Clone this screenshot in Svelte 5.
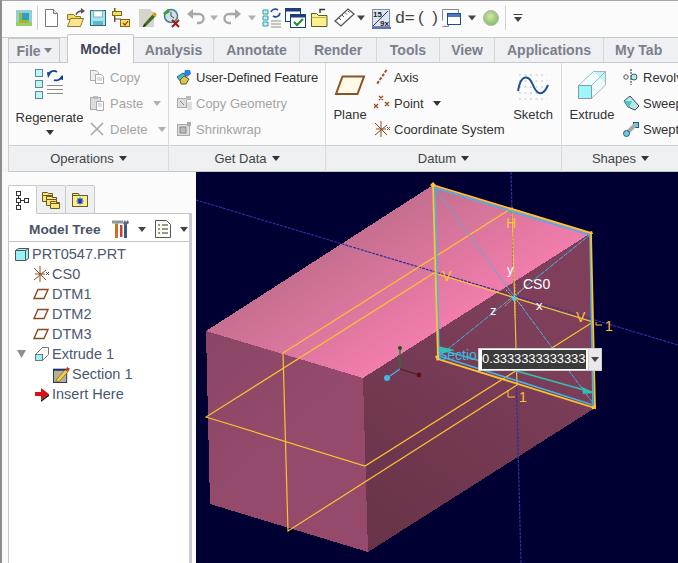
<script>
  const tabs = ['Analysis', 'Annotate', 'Render', 'Tools', 'View', 'Applications', 'My Tab'];
</script>

<div class="app">
  <div class="toolbar">
    <svg class="ti first" viewBox="0 0 24 24"><rect x="4" y="4" width="16" height="16" fill="#8fd0d8"/><rect x="4" y="16" width="16" height="4" fill="#9ccb6a"/><rect x="7" y="7" width="10" height="10" fill="#a3b62e"/><rect x="10" y="7" width="7" height="7" fill="#2f9fc0"/></svg>
    <span class="sep m1"></span>
    <svg class="ti m1" viewBox="0 0 24 24"><path d="M6.500 3.500h8l4 4v13h-12z" fill="#fff" stroke="#777"/><path d="M14.500 3.500v4h4" fill="#eee" stroke="#777"/></svg>
    <svg class="ti" viewBox="0 0 24 24"><path d="M4.500 8.500h6l2 2h5v3h-13z" fill="#f4d860" stroke="#8a7a30"/><path d="M4.500 20.500l3-8h13l-3 8z" fill="#fae78a" stroke="#8a7a30"/><path d="M13 9c1-3 3-4 6-4" fill="none" stroke="#555" stroke-width="1.400"/><path d="M18 2l4 3-4 3z" fill="#555"/></svg>
    <svg class="ti mn1" viewBox="0 0 24 24"><rect x="4.500" y="4.500" width="15" height="15" fill="#a5e4ea" stroke="#2a6d86"/><rect x="7.500" y="5" width="9" height="6" fill="#fff" stroke="#7fb6c2"/><rect x="7" y="15" width="10" height="4" fill="#5fb8cc"/></svg>
    <svg class="ti mn1" viewBox="0 0 24 24"><rect x="5" y="2" width="1.500" height="14" fill="#6c5a1c"/><rect x="3.500" y="5.500" width="9" height="4" fill="#f6e05a" stroke="#7a6a20"/><path d="M6 13h6" stroke="#555"/><rect x="11.500" y="13.500" width="9" height="7" fill="#f6e05a" stroke="#7a6a20"/><path d="M14 17l2 2 3-4" fill="none" stroke="#b52020" stroke-width="1.200"/></svg>
    <svg class="ti m2" viewBox="0 0 24 24"><path d="M4 3h11l4 4v14H4z" fill="#d5d5cc"/><path d="M9 18l9-10 3 2-10 10-3 1z" fill="#3f6a22"/><path d="M17 9l2-3 3 2-2 3z" fill="#d2a020"/><path d="M9 18l2 2-3 1z" fill="#222"/></svg>
    <svg class="ti" viewBox="0 0 24 24"><circle cx="12" cy="10" r="6.500" fill="#cfe0e8" stroke="#4a7a90" stroke-width="1.500"/><path d="M4 7l5-4 2 3-5 3z" fill="#3aa040"/><path d="M12 6v4l3 2" fill="none" stroke="#444"/><path d="M13 14l7 7M20 14l-7 7" stroke="#a01818" stroke-width="2"/></svg>
    <svg class="ti m1" viewBox="0 0 24 24"><path d="M8 8h7a4.500 4.500 0 0 1 0 9h-2" fill="none" stroke="#a8a8a8" stroke-width="2.400"/><path d="M9 3v10l-6-5z" fill="#a8a8a8"/></svg>
    <svg class="ta" viewBox="0 0 12 24"><path d="M2 9.500h8l-4 5z" fill="#b0b0b0"/></svg>
    <svg class="ti" viewBox="0 0 24 24"><path d="M16 8H9a4.500 4.500 0 0 0 0 9h2" fill="none" stroke="#a8a8a8" stroke-width="2.400"/><path d="M15 3v10l6-5z" fill="#a8a8a8"/></svg>
    <svg class="ta m2" viewBox="0 0 12 24"><path d="M2 9.500h8l-4 5z" fill="#b0b0b0"/></svg>
    <svg class="ti m2" viewBox="0 0 24 24"><path d="M3 4h5v4H3zM3 10h5v4H3zM3 16h5v4H3z" fill="#bff0f4" stroke="#3a9aa8"/><path d="M11 15h10M11 18h10M11 21h10" stroke="#8d8d8d"/><path d="M11 6a4.500 4.500 0 0 1 7-2" fill="none" stroke="#1a4a9a" stroke-width="1.600"/><path d="M20 7a4.500 4.500 0 0 1-7 3" fill="none" stroke="#1a4a9a" stroke-width="1.600"/></svg>
    <svg class="ti mn1" viewBox="0 0 24 24"><rect x="2.500" y="2.500" width="15" height="13" fill="#fff" stroke="#1c3f7a"/><rect x="3" y="3" width="14" height="2.500" fill="#1c3f7a"/><rect x="7.500" y="8.500" width="15" height="13" fill="#fff" stroke="#1c3f7a"/><rect x="8" y="9" width="14" height="2.500" fill="#1c3f7a"/><path d="M11 16l3 3 6-6" fill="none" stroke="#1f8a2f" stroke-width="2"/></svg>
    <svg class="ti" viewBox="0 0 24 24"><path d="M4.500 7.500h5l2 2h8.500v11h-15.500z" fill="#faf08c" stroke="#5a5a2a"/><path d="M4.500 11.500h15.500" stroke="#c4b440"/><path d="M13 7V3.500h5" fill="none" stroke="#333" stroke-width="1.400"/></svg>
    <svg class="ti m1" viewBox="0 0 24 24"><path d="M3 15L16 3l6 5L9 20z" fill="#fff" stroke="#555" stroke-width="1.300"/><path d="M7 12l2 2M10 9l2 2M13 6.500l2 2M16 5l1.500 1.500" stroke="#555"/></svg>
    <svg class="ta mn1" viewBox="0 0 12 24"><path d="M2 9.500h8l-4 5z" fill="#444"/></svg>
    <svg class="ti m2" viewBox="0 0 24 24"><rect x="3.500" y="3.500" width="17" height="17" fill="#dde6ef" stroke="#88a"/><text class="mini" x="4" y="11">15</text><path d="M4 20L19 5" stroke="#1c3f7a"/><text class="mini" x="11" y="20">9x</text><path d="M3 22h19" stroke="#1c4a9a" stroke-width="1.500"/></svg>
    <span class="dtxt">d=</span>
    <span class="dtxt paren">( )</span>
    <svg class="ti mn1" viewBox="0 0 24 24"><path d="M2.500 14.500v-11h16M2.500 20.500h6v-3" fill="none" stroke="#888"/><path d="M18.500 3.500v5" stroke="#888"/><rect x="7.500" y="7.500" width="13" height="11" fill="#fff" stroke="#1c4a9a"/><rect x="8" y="8" width="12" height="3" fill="#4a78c0"/></svg>
    <svg class="ta m2" viewBox="0 0 12 24"><path d="M2 9.500h8l-4 5z" fill="#444"/></svg>
    <svg class="ti m1" viewBox="0 0 24 24"><defs><radialGradient id="gb" cx=".45" cy=".4" r=".6"><stop offset="0" stop-color="#cfe9a8"/><stop offset="1" stop-color="#86bd62"/></radialGradient></defs><circle cx="12" cy="12" r="7.500" fill="url(#gb)" stroke="#b5b5b5"/></svg>
    <span class="sep m2"></span>
    <svg class="ta ml8" viewBox="0 0 12 24"><path d="M1.500 8.500h9" stroke="#444"/><path d="M2 11h8l-4 5z" fill="#444"/></svg>
  </div>

  <div class="tabbar">
    <div class="tab file">File <svg class="tri" viewBox="0 0 8 5"><path d="M0 0h8L4 5z" fill="#7a7f8a"/></svg></div>
    <div class="tab active">Model</div>
    {#each tabs as t}
      <div class="tab t-{t.replace(' ', '').toLowerCase()}">{t}</div>
    {/each}
  </div>

  <div class="ribbon">
    <section class="group g1">
      <div class="body">
        <div class="big regen">
          <svg class="bi" width="32" height="32" viewBox="0 0 32 32"><g fill="#bff3f5" stroke="#5a8a92"><rect x="1.500" y="1.500" width="7" height="7"/><rect x="1.500" y="12.500" width="7" height="7"/><rect x="1.500" y="23.500" width="7" height="7"/></g><path d="M14 7a6 6 0 0 1 9-3" fill="none" stroke="#123f9a" stroke-width="1.800"/><path d="M13 4l4 1-3 5z" fill="#123f9a"/><path d="M28 8a6 6 0 0 1-8 4" fill="none" stroke="#123f9a" stroke-width="1.800"/><path d="M29 12l-4-1 4-4z" fill="#123f9a"/><path d="M13 17.500h16M13 21.500h16M13 25.500h16" stroke="#8a8a8a"/></svg>
          <span>Regenerate</span>
          <svg class="tri dark" viewBox="0 0 8 5"><path d="M0 0h8L4 5z" fill="#333"/></svg>
        </div>
        <div class="col c-ops">
          <div class="row off"><svg class="si" viewBox="0 0 16 16"><path d="M1.500 1.500h6l2 2v8h-8z" fill="#eee" stroke="#aaa"/><path d="M6.500 5.500h6l2 2v7h-8z" fill="#fff" stroke="#aaa"/><path d="M8 9h5M8 11h5" stroke="#bbb"/></svg>Copy</div>
          <div class="row off"><svg class="si" viewBox="0 0 16 16"><rect x="1.500" y="2.500" width="10" height="12" fill="#ddd" stroke="#aaa"/><rect x="4" y="1" width="5" height="3" fill="#bbb"/><path d="M7.500 6.500h7v9h-7z" fill="#fff" stroke="#aaa"/><path d="M9 9h4M9 11h4" stroke="#bbb"/></svg>Paste <svg class="tri gap" viewBox="0 0 8 5"><path d="M0 0h8L4 5z" fill="#b0b0b0"/></svg></div>
          <div class="row off"><svg class="si" viewBox="0 0 16 16"><path d="M2 2l12 12M14 2L2 14" stroke="#aaa" stroke-width="1.600"/></svg>Delete <svg class="tri gap" viewBox="0 0 8 5"><path d="M0 0h8L4 5z" fill="#b0b0b0"/></svg></div>
        </div>
      </div>
      <div class="bar">Operations <svg class="tri dark" viewBox="0 0 8 5"><path d="M0 0h8L4 5z" fill="#333"/></svg></div>
    </section>

    <section class="group g2">
      <div class="body">
        <div class="col c-data">
          <div class="row tight"><svg class="si" viewBox="0 0 16 16"><path d="M1 8l6-4 3 3-5 6z" fill="#3fc4d4" stroke="#357"/><path d="M9 1h5l1 4-4 3-3-3z" fill="#2f7ee0"/><path d="M4 11l4-4 5 3-3 5H5z" fill="#d9c84a" stroke="#665a20"/></svg>User-Defined Feature</div>
          <div class="row off"><svg class="si" viewBox="0 0 16 16"><rect x="1.500" y="3.500" width="9" height="9" fill="#ddd" stroke="#aaa"/><rect x="10" y="1" width="5" height="4" fill="#bbb"/><rect x="11" y="7" width="5" height="8" fill="#ddd"/><path d="M4 6l4 4" stroke="#888"/></svg>Copy Geometry</div>
          <div class="row off"><svg class="si" viewBox="0 0 16 16"><rect x="1.500" y="3.500" width="12" height="11" fill="#ddd" stroke="#aaa"/><rect x="4" y="6" width="6" height="6" fill="#bbb" stroke="#888"/><rect x="11" y="1" width="4" height="4" fill="#aaa"/></svg>Shrinkwrap</div>
        </div>
      </div>
      <div class="bar">Get Data <svg class="tri dark" viewBox="0 0 8 5"><path d="M0 0h8L4 5z" fill="#333"/></svg></div>
    </section>

    <section class="group g3">
      <div class="body">
        <div class="big plane">
          <svg class="bi" width="32" height="32" viewBox="0 0 32 32"><path d="M8.500 7.500H30L23.500 25H2z" fill="#fffbe8" stroke="#8a5228" stroke-width="2"/></svg>
          <span>Plane</span>
        </div>
        <div class="col c-datum">
          <div class="row"><svg class="si" viewBox="0 0 16 16"><path d="M12.500 1L3 15" stroke="#9a5226" stroke-width="2" stroke-dasharray="3 1.500"/></svg>Axis</div>
          <div class="row"><svg class="si" viewBox="0 0 16 16"><path d="M5 1l4 4M9 1L5 5M0 9l4 4M4 9l-4 4M11 7l4 4M15 7l-4 4" stroke="#9a4a20" stroke-width="1.300"/></svg>Point <svg class="tri dark gap" viewBox="0 0 8 5"><path d="M0 0h8L4 5z" fill="#333"/></svg></div>
          <div class="row"><svg class="si" viewBox="0 0 16 16"><path d="M7 0v16M1 2l12 12M1 14L13 4M2 8h10" stroke="#8a4a20"/><path d="M13 6l3 3M16 6l-3 3" stroke="#555"/></svg>Coordinate System</div>
        </div>
        <div class="big sketch">
          <svg class="bi" width="32" height="32" viewBox="0 0 32 32"><path d="M2 6h28M2 12h28M2 18h28M2 24h28M2 30h28" stroke="#b8c0c8" stroke-dasharray="2 3.500"/><path d="M1 22C4 4 12 6 16 16S26 28 31 16" fill="none" stroke="#1f4f96" stroke-width="2"/></svg>
          <span>Sketch</span>
        </div>
      </div>
      <div class="bar">Datum <svg class="tri dark" viewBox="0 0 8 5"><path d="M0 0h8L4 5z" fill="#333"/></svg></div>
    </section>

    <section class="group g4">
      <div class="body">
        <div class="big extrude">
          <svg class="bi" width="32" height="32" viewBox="0 0 32 32"><path d="M3 17L18 2h12v15L15 30H3z" fill="#eefcfd"/><path d="M18 2.500H29.500V14L24 9z" fill="#bdf6fa"/><rect x="2.500" y="16.500" width="13" height="13" fill="#9ef5fb" stroke="#8a9aa0"/><path d="M2.500 16.500L17.500 2.500H29.500V16L15.500 29.500M15.500 16.500L29.500 2.500" fill="none" stroke="#a8b4ba"/></svg>
          <span>Extrude</span>
        </div>
        <div class="col c-shapes">
          <div class="row"><svg class="si" viewBox="0 0 16 16"><path d="M8 0v16" stroke="#222" stroke-dasharray="2 1"/><circle cx="3" cy="8" r="2.200" fill="#fff" stroke="#555"/><circle cx="11" cy="8" r="3" fill="#9ceef2" stroke="#555"/></svg>Revolve</div>
          <div class="row"><svg class="si" viewBox="0 0 16 16"><path d="M1 6l6-5 9 10-4 4-7-3z" fill="#b8e8ea" stroke="#445"/><path d="M1 6l5 7 3-7z" fill="#4fc8cc"/></svg>Sweep</div>
          <div class="row"><svg class="si" viewBox="0 0 16 16"><rect x="10.500" y="1.500" width="5" height="5" fill="#5fd4dc" stroke="#357"/><path d="M4 12l8-8" stroke="#aaa" stroke-width="4"/><circle cx="3.500" cy="12.500" r="3" fill="#5fd4dc" stroke="#357"/></svg>Swept</div>
        </div>
      </div>
      <div class="bar">Shapes <svg class="tri dark" viewBox="0 0 8 5"><path d="M0 0h8L4 5z" fill="#333"/></svg></div>
    </section>
  </div>

  <div class="main">
    <aside class="side">
      <div class="ptabs">
        <div class="ptab on"><svg width="16" height="20" viewBox="0 0 16 20"><g fill="#fff" stroke="#333"><rect x="1.500" y="1.500" width="4" height="4"/><rect x="1.500" y="8.500" width="4" height="4"/><rect x="9.500" y="8.500" width="4" height="4"/><rect x="1.500" y="15.500" width="4" height="4"/></g><path d="M3.500 5.500v3M3.500 12.500v3M5.500 10.500h4" stroke="#333"/></svg></div>
        <div class="ptab"><svg width="20" height="20" viewBox="0 0 20 20"><g fill="#f8e878" stroke="#6a5a20"><path d="M1.500 5.500v-3h5l1 1h4v2z"/><path d="M1.500 5.500h10v6h-10z"/><path d="M5.500 9.500v-3h5l1 1h4v2z"/><path d="M5.500 9.500h10v6h-10z"/><path d="M9.500 13.500v-2h5l1 1h3v1z"/><path d="M9.500 13.500h9v5h-9z"/></g></svg></div>
        <div class="ptab"><svg width="18" height="16" viewBox="0 0 18 16"><path d="M1.500 3.500v-2h6l1 2z" fill="#f8e878" stroke="#6a5a20"/><rect x="1.500" y="3.500" width="15" height="11" fill="#fbf08a" stroke="#6a5a20"/><path d="M9 5.500v7M5.500 9h7M6.500 6.500l5 5M11.500 6.500l-5 5" stroke="#1030d0" stroke-width="1.200"/></svg></div>
      </div>
      <div class="panel">
        <div class="phead">
          <span class="ptitle">Model Tree</span>
          <svg class="htool" width="20" height="20" viewBox="0 0 20 20"><path d="M1 1.500h11v3H1z" fill="#8a979e"/><path d="M4 4.500h3V19H4z" fill="#c8702a"/><path d="M7 5h1v14H7z" fill="#fff"/><path d="M9 6h2.500v12H9z" fill="#d04030"/><path d="M13 5l3-1v15h-3z" fill="#3a5a8a"/><path d="M12 4l2-3 1 2 2-2 1 3-3 2h-2z" fill="#5a6a7a"/></svg>
          <svg class="tri dark h1" viewBox="0 0 8 5"><path d="M0 0h8L4 5z" fill="#444"/></svg>
          <svg class="hlist" width="16" height="18" viewBox="0 0 16 18"><path d="M.5.500h11l4 4v13H.500z" fill="#fdfdf2" stroke="#555"/><path d="M3 5h2M3 9h2M3 13h2M7 5h6M7 9h6M7 13h6" stroke="#333"/></svg>
          <svg class="tri dark h2" viewBox="0 0 8 5"><path d="M0 0h8L4 5z" fill="#444"/></svg>
        </div>
        <ul class="tree">
          <li class="root"><svg class="si" viewBox="0 0 16 16"><path d="M1.500 4.500l3-2h10v10l-3 2h-10z" fill="#9af2f8" stroke="#555"/><path d="M11.500 14.500v-10h-10M11.500 4.500l3-2" fill="none" stroke="#555"/></svg>PRT0547.PRT</li>
          <li class="l1"><svg class="si" viewBox="0 0 16 16"><path d="M7 0v16M1 2l12 12M1 14L13 4M2 8h10" stroke="#8a4a20"/><path d="M13 6l3 3M16 6l-3 3" stroke="#555"/></svg>CS0</li>
          <li class="l1"><svg class="si" viewBox="0 0 16 16"><path d="M5 3.500h10l-4 9H1z" fill="#fff" stroke="#8a4a20" stroke-width="1.400"/></svg>DTM1</li>
          <li class="l1"><svg class="si" viewBox="0 0 16 16"><path d="M5 3.500h10l-4 9H1z" fill="#fff" stroke="#8a4a20" stroke-width="1.400"/></svg>DTM2</li>
          <li class="l1"><svg class="si" viewBox="0 0 16 16"><path d="M5 3.500h10l-4 9H1z" fill="#fff" stroke="#8a4a20" stroke-width="1.400"/></svg>DTM3</li>
          <li class="ext"><svg class="exp" width="10" height="8" viewBox="0 0 10 8"><path d="M0 0h9L4.500 8z" fill="#8f8f8f"/></svg><svg class="si" viewBox="0 0 16 16"><path d="M1.500 8.500l7-7h6v7l-6 6h-7z" fill="#fff" stroke="#777"/><rect x="1.500" y="8.500" width="7" height="6" fill="#9af2f8" stroke="#777"/></svg>Extrude 1</li>
          <li class="l2"><svg class="si big16" viewBox="0 0 18 18"><rect x=".5" y="3.500" width="14" height="14" fill="#b8b090" stroke="#1c2f6a"/><rect x="0" y="3" width="15" height="2" fill="#1c2f6a"/><path d="M4 14l9-10 3 2-9 10-4 1z" fill="#f4d040" stroke="#333" stroke-width=".5"/><path d="M13 4l2-3 3 2-2 3z" fill="#c04030"/></svg>Section 1</li>
          <li class="ins"><svg class="si" viewBox="0 0 16 16"><path d="M0 6h6V2l8 6-8 6v-4H0z" fill="#d8101c"/><path d="M6 14l8-6v2l-8 6z" fill="#222"/></svg>Insert Here</li>
        </ul>
      </div>
    </aside>

    <div class="view">
      <svg class="scene" viewBox="196 172 482 391" preserveAspectRatio="none">
        <defs>
          <linearGradient id="top" gradientUnits="userSpaceOnUse" x1="320" y1="258" x2="385" y2="362"><stop offset="0" stop-color="#c66f90"/><stop offset="1" stop-color="#f17dac"/></linearGradient>
          <linearGradient id="lf" gradientUnits="userSpaceOnUse" x1="206" y1="331" x2="300" y2="440"><stop offset="0" stop-color="#8a4666"/><stop offset="1" stop-color="#954a6b"/></linearGradient>
          <linearGradient id="rf" gradientUnits="userSpaceOnUse" x1="370" y1="520" x2="520" y2="300"><stop offset="0" stop-color="#69344a"/><stop offset="1" stop-color="#7f3f5b"/></linearGradient>
        </defs>
        <g shape-rendering="crispEdges">
          <path d="M206 331L433 185L591 233L363 378z" fill="url(#top)"/>
          <path d="M206 331L363 378L368 552L210 504z" fill="url(#lf)"/>
          <path d="M363 378L591 233L595 408L368 552z" fill="url(#rf)"/>
        </g>
        <g fill="none" stroke="#2f2f9e" stroke-width="1.200" stroke-dasharray="3 1">
          <path d="M196 200L678 345"/>
          <path d="M511 172L521 563"/>
        </g>
        <g fill="none" stroke="#fcc22f" stroke-width="1.200">
          <path d="M206 417L365 466L593 322L434 273z"/>
          <path d="M283 353L512 208L517 385L288 531z"/>
        </g>
        <g fill="none" stroke="#3fb7e6">
          <path d="M433 186L595 406" stroke-dasharray="5 1" />
          <path d="M591 234L438 357" stroke-dasharray="5 1" />
          <path d="M435 188L590 235L593 405L439 356z" stroke-width="1.600"/>
        </g>
        <path d="M438 349L595 393" stroke="#2fc0ae" stroke-width="1.500"/>
        <path d="M438 346L455 350L441 354z" fill="#2fc0ae"/>
        <path d="M595 393L582 387L583 394z" fill="#2fc0ae"/>
        <path d="M433 185L591 233L595 408L438 359z" fill="none" stroke="#fcc22f" stroke-width="1.800"/>
        <path d="M430 185l3-3 3 3-3 3zM435 356l3-1 2 4-3 2zM592 406l4-1v4h-4zM589 232l3-1 1 3h-3z" fill="#fcc22f"/>
        <path d="M515 284L515 318M506 290L523 307M505 306L526 286M497 292L535 304" stroke="#fcc22f" stroke-width=".8" fill="none" stroke-dasharray="2 1"/>
        <path d="M511 297L518 297L514 302z" fill="#59c9e8"/>

        <text class="lbl white cs" x="523" y="289">CS0</text>
        <text class="lbl white xs" x="507" y="274">y</text>
        <text class="lbl white xs" x="490" y="315">z</text>
        <text class="lbl white xs" x="536" y="310">x</text>
        <text class="lbl cyan" x="438" y="360">Sectio</text>
        <text class="lbl yel" x="506" y="228">H</text>
        <text class="lbl yel" x="442" y="281">V</text>
        <text class="lbl yel" x="576" y="322">V</text>
        <path d="M596 322v3h6" fill="none" stroke="#fcc22f"/>
        <text class="lbl yel" x="605" y="331">1</text>
        <path d="M508 390v7h7" fill="none" stroke="#fcc22f"/>
        <text class="lbl yel" x="519" y="402">1</text>

        <path d="M400 369v-21" stroke="#1f7a2a" stroke-width="1.300"/>
        <circle cx="400" cy="348" r="2" fill="#155a20"/>
        <path d="M400 369l-13 9" stroke="#3fb7e6" stroke-width="1.300"/>
        <circle cx="387" cy="378" r="3" fill="#3fb7e6"/>
        <path d="M400 369l19 6" stroke="#5a1a22" stroke-width="1.300"/>
        <circle cx="419" cy="375" r="2.400" fill="#5a1018"/>
      </svg>
      <div class="popup">
        <span class="value">0.3333333333333</span>
        <span class="drop"><svg class="tri" viewBox="0 0 8 5"><path d="M0 0h8L4 5z" fill="#444"/></svg></span>
      </div>
    </div>
  </div>
</div>

<style>
  :global(body) { margin: 0; background: #fff; }
  .app {
    width: 678px; height: 563px; overflow: hidden; display: flex; flex-direction: column;
    background: #f6f6f6; font-family: "Liberation Sans", Arial, sans-serif; font-size: 13px; color: #333;
    box-sizing: border-box; border-top: 1px solid #a6a6a6; border-left: 2px solid #8c8c8c;
  }
  .toolbar {
    height: 37px; flex: none; box-sizing: border-box; padding-bottom: 3px; display: flex; align-items: center;
    background: #fbfbfb; border-bottom: 1px solid #c8c8c8; margin-left: -2px; padding-left: 12px;
  }
  .ti { width: 24px; height: 24px; flex: none; }
  .ta { width: 12px; height: 24px; flex: none; }
  .m1 { margin-left: 1px; }
  .m2 { margin-left: 2px; }
  .mn1 { margin-left: -1px; }
  .ml8 { margin-left: 6px; }
  .sep { width: 1px; height: 24px; background: #d0d0d0; flex: none; }
  .mini { font-size: 8px; fill: #222; font-weight: bold; }
  .dtxt { width: 24px; text-align: center; font-size: 17px; color: #444; flex: none; }
  .paren { font-size: 17px; letter-spacing: 2px; white-space: nowrap; }

  .tabbar {
    height: 25px; flex: none; box-sizing: border-box; display: flex; align-items: stretch; margin-left: 6px;
    background: #eef0f3; border-bottom: 1px solid #c8c8c8; font-size: 14px; font-weight: bold; color: #7b7f8b;
  }
  .tab { display: flex; align-items: center; justify-content: center; box-sizing: border-box; border-right: 1px solid #d6d8dc; flex: none; }
  .file { width: 52px; border: 1px solid #c8c8c8; border-bottom: none; gap: 3px; margin-right: 7px; }
  .active { width: 67px; height: 29px; margin-top: -4px; background: #fbfbfb; color: #414a5c; border: 1px solid #c8c8c8; border-bottom: none; border-radius: 2px 2px 0 0; }
  .t-analysis { width: 80px; }
  .t-annotate { width: 86px; }
  .t-render { width: 77px; }
  .t-tools { width: 63px; }
  .t-view { width: 55px; }
  .t-applications { width: 109px; }
  .t-mytab { width: 74px; border-right: none; justify-content: flex-start; padding-left: 11px; }

  .ribbon { display: flex; flex: none; margin-left: 6px; height: 109px; border-left: 1px solid #d0d0d0; margin-top: 0; }
  .group { display: flex; flex-direction: column; box-sizing: border-box; border-right: 1px solid #dadada; flex: none; }
  .g1 { width: 160px; }
  .g2 { width: 157px; }
  .g3 { width: 236px; }
  .g4 { width: 117px; border-right: none; }
  .body { height: 82px; box-sizing: border-box; background: #fbfbfb; display: flex; }
  .bar {
    height: 27px; box-sizing: border-box; background: #eef0f2; border-top: 1px solid #cfcfcf; border-bottom: 1px solid #c4c4c4;
    display: flex; align-items: center; justify-content: center; gap: 5px; color: #444;
  }
  .tri { width: 8px; height: 5px; flex: none; }
  .gap { margin-left: 5px; }
  .big { display: flex; flex-direction: column; align-items: center; flex: none; }
  .big span { line-height: 15px; }
  .bi { display: block; flex: none; }
  .regen { width: 81px; padding-top: 5px; }
  .regen span { margin-top: 10px; }
  .regen .tri { margin-top: 5px; }
  .col { display: flex; flex-direction: column; padding-top: 1px; flex: none; }
  .c-ops { margin-left: -1px; }
  .c-ops .row { gap: 5px; }
  .c-data { padding-left: 7px; }
  .c-datum { width: 134px; }
  .c-shapes { padding-left: 1px; }
  .row { height: 26px; display: flex; align-items: center; gap: 4px; white-space: nowrap; }
  .row.off { color: #a4a4a4; }
  .row.tight { letter-spacing: -.15px; }
  .si { width: 16px; height: 16px; flex: none; }
  .plane { width: 48px; padding-top: 6px; }
  .plane span, .sketch span, .extrude span { margin-top: 6px; }
  .sketch { width: 50px; padding-top: 6px; }
  .extrude { width: 60px; padding-top: 6px; }

  .main { flex: 1; display: flex; min-height: 0; margin-left: -2px; }
  .side { width: 196px; flex: none; box-sizing: border-box; padding: 13px 4px 0 6px; display: flex; flex-direction: column; background: #fbfbfb; border-left: 2px solid #8c8c8c; }
  .ptabs { display: flex; height: 29px; flex: none; position: relative; z-index: 1; margin-bottom: -1px; }
  .ptab { width: 29px; box-sizing: border-box; background: #eef0f3; border: 1px solid #c8c8c8; border-left: none; border-radius: 2px 2px 0 0; display: flex; align-items: center; justify-content: center; }
  .ptab.on { background: #fff; border-left: 1px solid #c8c8c8; border-bottom-color: #fff; }
  .panel { flex: 1; background: #fff; border-left: 1px solid #c8c8c8; border-right: 3px solid #c8ccd2; border-top: 1px solid #c8c8c8; display: flex; flex-direction: column; min-height: 0; }
  .phead { height: 28px; box-sizing: border-box; padding-top: 3px; flex: none; display: flex; align-items: center; border-bottom: 1px solid #c4c4c4; color: #4a5568; }
  .ptitle { font-weight: bold; font-size: 13.700px; margin-left: 20px; white-space: nowrap; }
  .htool { margin-left: 10px; flex: none; }
  .h1 { margin-left: 7px; }
  .hlist { margin-left: 9px; flex: none; }
  .h2 { margin-left: 9px; }
  .tree { list-style: none; margin: 0; padding: 2px 0 0; font-size: 14.500px; color: #4a5870; }
  .tree li { height: 20px; display: flex; align-items: center; white-space: nowrap; }
  .root { padding-left: 5px; gap: 2px; }
  .l1 { padding-left: 24px; gap: 3px; }
  .ext { padding-left: 8px; }
  .exp { margin-right: 7px; flex: none; }
  .ext .si { margin-right: 2px; }
  .l2 { padding-left: 44px; gap: 2px; }
  .big16 { width: 17px; height: 17px; }
  .ins { padding-left: 26px; gap: 1px; }

  .view { flex: 1; position: relative; background: #000033; min-width: 0; }
  .scene { display: block; width: 100%; height: 100%; }
  .lbl { font-family: "Liberation Sans", Arial, sans-serif; font-size: 14px; }
  .white { fill: #fff; }
  .cs { font-size: 14px; }
  .xs { font-size: 13px; }
  .cyan { fill: #3fb7e6; }
  .yel { fill: #fcc22f; }
  .popup { position: absolute; left: 282px; top: 176px; width: 124px; height: 23px; box-sizing: border-box; display: flex; background: #fff; border: 1px solid #cfcfcf; padding: 1px 0 1px 3px; }
  .value { width: 104px; background: #3a3a3a; color: #fff; font-size: 13px; line-height: 18px; overflow: hidden; white-space: nowrap; letter-spacing: -.1px; height: 19px; }
  .drop { margin: -1px 0 -1px 2px; flex: 1; background: #e8e8ea; border-left: 1px solid #cfcfcf; display: flex; align-items: center; justify-content: center; }
</style>
